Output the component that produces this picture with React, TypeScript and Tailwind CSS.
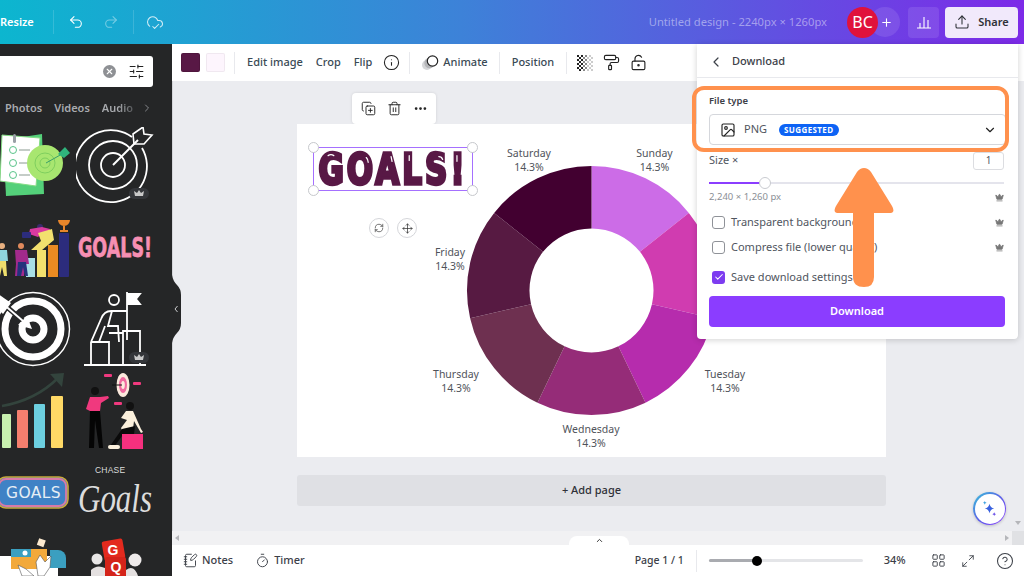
import {
  Undo2, Redo2, CloudCheck, Info, CopyPlus, Trash2, Ellipsis, Plus, Upload, ChevronLeft, ChevronDown,
  ChevronRight, ChevronUp, Image, Crown, Check, RefreshCw, Move, PaintRoller, LockKeyholeOpen,
  SlidersHorizontal, NotebookPen, Timer, LayoutGrid, Maximize2, CircleHelp, X,
} from "lucide-react";

const SEGMENTS = ["#cc6ce7", "#d03cb0", "#b62cad", "#952c78", "#6e3050", "#571a42", "#420030"];
const LABELS = [
  { name: "Saturday", x: 529, y: 157 },
  { name: "Sunday", x: 654.5, y: 157 },
  { name: "Friday", x: 450, y: 256 },
  { name: "Thursday", x: 456, y: 378 },
  { name: "Wednesday", x: 591, y: 433 },
  { name: "Tuesday", x: 725, y: 378 },
];

function segmentPath(i: number): string {
  const cx = 591.5, cy = 290.5, R = 124.5, r = 62;
  const a0 = -Math.PI / 2 + (i * 2 * Math.PI) / 7;
  const a1 = -Math.PI / 2 + ((i + 1) * 2 * Math.PI) / 7;
  const p = (rad: number, a: number) => `${(cx + rad * Math.cos(a)).toFixed(2)} ${(cy + rad * Math.sin(a)).toFixed(2)}`;
  return `M${p(R, a0)} A${R} ${R} 0 0 1 ${p(R, a1)} L${p(r, a1)} A${r} ${r} 0 0 0 ${p(r, a0)} Z`;
}

function Divider() {
  return <div className="h-[22px] w-px bg-[#e8e9ed]" />;
}

function CrownBadge({ x, y }: { x: number; y: number }) {
  return (
    <g>
      <rect x={x - 10} y={y - 5} width="20" height="11" rx="5.5" fill="#34363a" />
      <path d={`M${x - 4} ${y + 3} l-1 -5 l3 2 l2 -3 l2 3 l3 -2 l-1 5 z`} fill="#c9c9c9" />
    </g>
  );
}

// stickers are drawn in page coordinates through the viewBox
function Stickers() {
  return (
    <div className="mt-[10px] grid grid-cols-[76px_96px] grid-rows-[80px_78px_85px_90px_70px_46px]">
      <svg viewBox="0 127 76 80" className="h-full w-full">
        <polygon points="3,140 42,134 44,194 6,196" fill="#54d07a" />
        <polygon points="2,135 40,138 36,186 0,181" fill="#ffffff" stroke="#86dc86" strokeWidth="1" />
        <rect x="13" y="134" width="3" height="9" rx="1.5" fill="#9aa0a6" />
        {[150, 163, 175].map((y) => (
          <g key={y}>
            <circle cx="13" cy={y} r="3.5" fill="none" stroke="#5ac48a" strokeWidth="1" />
            <line x1="19" y1={y} x2="30" y2={y} stroke="#8a9a90" strokeWidth="1" />
          </g>
        ))}
        <circle cx="45" cy="163" r="18" fill="#a8e670" />
        <circle cx="45" cy="163" r="10" fill="none" stroke="#7fcf5e" strokeWidth="1" />
        <circle cx="45" cy="163" r="5" fill="none" stroke="#7fcf5e" strokeWidth="1" />
        <line x1="46" y1="163" x2="62" y2="154" stroke="#3a9e6a" strokeWidth="1" />
        <polygon points="58,154 65,147 70,153 64,158" fill="#2fb47c" />
      </svg>
      <svg viewBox="76 127 96 80" className="h-full w-full">
        <g fill="none" stroke="#ffffff">
          <path d="M132 137 A36 36 0 1 0 142 148" strokeWidth="1.8" />
          <circle cx="113" cy="165" r="24" strokeWidth="1.8" />
          <circle cx="113" cy="165" r="12" strokeWidth="1.8" />
          <line x1="113" y1="165" x2="138" y2="140" strokeWidth="2" />
          <path d="M134 144 L133 134 L143 127 L144 134 L152 135 L144 144 Z" strokeWidth="1.6" />
        </g>
        <CrownBadge x={139} y={193} />
      </svg>
      <svg viewBox="0 207 76 78" className="h-full w-full">
        <rect x="26" y="258" width="9" height="19" fill="#a8dfe6" />
        <rect x="37" y="250" width="9" height="27" fill="#f2e06e" />
        <rect x="48" y="245" width="10" height="32" fill="#ea8a22" />
        <rect x="59" y="233" width="10" height="44" rx="1" fill="#2c2c7c" />
        <path d="M58 220 h12 a6 6 0 0 1 -12 0 z M63 226 h2 v4 h3 v2 h-8 v-2 h3 z" fill="#e8862a" />
        <circle cx="21" cy="246" r="3" fill="#e08a5c" />
        <path d="M15 250 h12 l2 14 h-4 l-1 12 h-3 l-1 -10 l-2 10 h-3 l1 -12 z" fill="#a22a8c" />
        <path d="M18 262 h8 l2 14 h-3 l-2 -9 l-2 9 h-4 z" fill="#24327c" />
        <circle cx="2" cy="246" r="3" fill="#e8b080" />
        <path d="M-4 250 h11 l1 11 h-12 z" fill="#8fd4dc" />
        <path d="M-3 261 h9 l1 15 h-3 l-2 -9 l-2 9 h-3 z" fill="#eede6c" />
        <circle cx="40" cy="227" r="3" fill="#3c2a6c" />
        <path d="M30 229 l12 -2 l8 2 l-1 4 l-8 1 l-3 3 l-9 -3 z" fill="#d83aa0" />
        <path d="M38 233 l14 -4 l2 11 l-12 10 l-11 0 l10 -9 z" fill="#f2e06e" />
        <rect x="22" y="232" width="9" height="6" rx="1" fill="#2c2c7c" />
      </svg>
      <svg viewBox="76 207 96 78" className="h-full w-full">
        <text transform="translate(78 257) scale(1 1.55)" fontFamily="DejaVu Sans" fontWeight="700" fontSize="17.5" fill="#f78fb3" stroke="#f78fb3" strokeWidth="0.5">GOALS!</text>
      </svg>
      <svg viewBox="0 285 76 85" className="h-full w-full">
        <g fill="none" stroke="#ffffff">
          <circle cx="33" cy="329" r="36.5" strokeWidth="1.4" />
          <circle cx="33" cy="329" r="28" strokeWidth="7" />
          <circle cx="33" cy="329" r="11" strokeWidth="7" />
        </g>
        <line x1="0" y1="301" x2="30" y2="327" stroke="#252627" strokeWidth="5" />
        <line x1="2" y1="303" x2="30" y2="327" stroke="#ffffff" strokeWidth="2" />
        <polygon points="32,329 18,325 27,316" fill="#ffffff" />
        <polygon points="-3,293 11,303 3,314 -3,308" fill="#ffffff" />
      </svg>
      <svg viewBox="76 285 96 85" className="h-full w-full">
        <g fill="none" stroke="#ffffff" strokeWidth="1.8">
          <circle cx="114" cy="300" r="5" />
          <line x1="127" y1="292" x2="127" y2="340" />
          <path d="M127 294 h13 l-4 5 l4 5 h-13" fill="#ffffff" />
          <path d="M91 342 l10 -23 q3 -8 10 -8 h16 M112 311 l-4 15 h10 l1 16 M99 342 l6 -16" />
          <path d="M91 342 h18 v23 M91 342 v23 M109 333 h14 v32 M123 333 v-2 h17 v34" />
          <line x1="84" y1="365" x2="146" y2="365" />
        </g>
        <CrownBadge x={139} y={357} />
      </svg>
      <svg viewBox="0 370 76 90" className="h-full w-full">
        <path d="M2 406 Q36 400 58 378" fill="none" stroke="#33443d" strokeWidth="2.5" />
        <polygon points="50,374 64,373 62,387" fill="#33443d" />
        <rect x="2" y="414" width="9" height="34" rx="1" fill="#c9f0b0" />
        <rect x="17" y="410" width="11" height="38" rx="1" fill="#f57f6e" />
        <rect x="34" y="404" width="11" height="44" rx="1" fill="#6ccfe0" />
        <rect x="51" y="396" width="12" height="52" rx="1" fill="#ffd966" />
      </svg>
      <svg viewBox="76 370 96 90" className="h-full w-full">
        <ellipse cx="123" cy="385" rx="6.5" ry="12" fill="#fbe9dc" />
        <ellipse cx="123" cy="385" rx="4" ry="8" fill="#f06aa0" />
        <ellipse cx="123" cy="385" rx="1.8" ry="4" fill="#fbe9dc" />
        <line x1="112" y1="385" x2="122" y2="385" stroke="#111111" strokeWidth="1" />
        <rect x="104" y="374" width="8" height="3" rx="1" fill="#f0397e" />
        <rect x="133" y="382" width="8" height="3" rx="1" fill="#f0397e" />
        <rect x="114" y="402" width="8" height="3" rx="1" fill="#f0397e" />
        <circle cx="95" cy="391" r="4" fill="#111111" />
        <path d="M90 397 h10 l8 -1 l1 2 l-8 5 l-1 8 h-10 l-4 -2 z" fill="#f0397e" />
        <path d="M90 411 h10 l3 37 h-4 l-4 -28 l-1 28 h-5 z" fill="#050505" />
        <circle cx="130" cy="406" r="4" fill="#111111" />
        <path d="M126 411 h7 l8 18 l2 3 l-2 1 l-7 -12 l-1 8 l-10 3 l-2 -4 l6 -8 l-6 -2 z" fill="#fbf0dc" />
        <path d="M122 429 l13 -3 l-1 8 l-12 2 l-8 11 l-4 -1 z" fill="#0a0a0a" />
        <rect x="122" y="434" width="21" height="15" fill="#f5307e" />
        <rect x="108" y="445" width="12" height="4" rx="2" fill="#fbf0dc" />
      </svg>
      <svg viewBox="0 460 76 70" className="h-full w-full">
        <rect x="-3" y="477" width="71" height="31" rx="9" fill="#3f82c5" stroke="#c9a83a" strokeWidth="1.6" />
        <rect x="-1" y="479" width="67" height="27" rx="7" fill="none" stroke="#d87aa8" strokeWidth="1.8" />
        <text x="6" y="498" letterSpacing="0.4" fontFamily="DejaVu Sans" fontSize="15.5" fill="#e6eef5">GOALS</text>
      </svg>
      <svg viewBox="76 460 96 70" className="h-full w-full">
        <text x="95" y="473" fontFamily="Liberation Sans" fontSize="8.5" letterSpacing="0.2" fill="#dcdcdc">CHASE</text>
        <text transform="translate(78 512) scale(1 1.3)" fontFamily="Liberation Serif" fontStyle="italic" fontSize="31" fill="#dcdcdc">Goals</text>
      </svg>
      <svg viewBox="0 530 76 46" className="h-full w-full">
        <rect x="-2" y="556" width="60" height="24" rx="3" fill="#ffffff" />
        <rect x="11" y="549" width="20" height="20" fill="#f2a93b" />
        <rect x="31" y="549" width="16" height="20" fill="#f2a93b" />
        <rect x="11" y="549" width="20" height="8" fill="#3b9fc0" />
        <path d="M50 550 h8 a8 8 0 0 1 8 8 v10 h-16 z" fill="#3b9fc0" />
        <circle cx="25" cy="553" r="2.5" fill="#ffffff" />
        <rect x="38" y="539" width="7" height="7" fill="#fbe9cf" transform="rotate(20 41 542)" />
        <path d="M38 576 l-2 -14 l4 -7 l5 7 l6 -6 l-1 11 l-6 9 z" fill="#ffffff" stroke="#555555" strokeWidth="0.6" />
        <path d="M18 565 l8 4 l8 7 h-12 z" fill="#ffffff" stroke="#555555" strokeWidth="0.6" />
      </svg>
      <svg viewBox="76 530 96 46" className="h-full w-full">
        <rect x="103" y="540" width="21" height="20" rx="2" fill="#e32a1e" transform="rotate(-10 113 550)" />
        <rect x="105" y="557" width="21" height="20" rx="2" fill="#d4241a" />
        <text x="113" y="555" textAnchor="middle" fontFamily="Liberation Sans" fontWeight="700" fontSize="14" fill="#ffffff">G</text>
        <text x="116" y="572" textAnchor="middle" fontFamily="Liberation Sans" fontWeight="700" fontSize="14" fill="#ffffff">Q</text>
        <circle cx="97" cy="559" r="5.5" fill="#e8e6e6" />
        <circle cx="135" cy="560" r="6.5" fill="#eeeaea" />
        <path d="M91 570 q6 -6 14 -2 v8 h-14 z M126 570 q8 -6 12 6 h-12 z" fill="#e4e0e0" />
      </svg>
    </div>
  );
}

function DownloadPanel() {
  return (
    <div className="absolute left-[697px] top-[44px] z-20 flex h-[295px] w-[321px] flex-col rounded-b-[4px] bg-white text-[11px] text-[#50555e] shadow-[0_1px_6px_rgba(0,0,0,0.18)]">
      <div className="flex h-[34px] items-center border-b border-[#e8e9ed] pl-[11px] pt-[2px]">
        <ChevronLeft size={16} strokeWidth={1.8} className="text-[#3c4048]" />
        <span className="ml-[8px] font-medium text-[#3c4048]">Download</span>
      </div>
      <div className="flex flex-col px-[12px]">
        <div className="mt-[16px] h-[14px] text-[9.5px] font-semibold leading-[14px] text-[#3c4048]">File type</div>
        <div className="mt-[6px] flex h-[31px] w-[297px] items-center rounded-[4px] border border-[#d5d7dc] pl-[10px]">
          <Image size={16} strokeWidth={1.7} className="text-[#222]" />
          <span className="ml-[8px] text-[11px] text-[#50555e]">PNG</span>
          <span className="ml-[12px] flex h-[12px] items-center rounded-full bg-[#0d63f5] px-[5px] text-[8px] font-bold tracking-[0.4px] text-white">SUGGESTED</span>
          <ChevronDown size={14} strokeWidth={2} className="ml-auto mr-[8px] text-[#222]" />
        </div>
        <div className="mt-[7px] flex h-[17px] items-center justify-between">
          <span className="text-[11px]">Size ×</span>
          <div className="mr-[2px] flex h-[18px] w-[31px] items-center justify-center rounded-[3px] border border-[#dcdde1] text-[10px]">1</div>
        </div>
        <div className="relative mt-[13px] h-[2px] w-[295px] bg-[#e4e4ec]">
          <div className="h-full w-[56px] bg-[#8b3dff]" />
          <div className="absolute left-[50px] top-[-5px] h-[12px] w-[12px] rounded-full border border-[#c9cbd0] bg-white" />
        </div>
        <div className="mt-[6px] flex h-[14px] items-center justify-between text-[9.5px] text-[#8b8f96]">
          <span>2,240 × 1,260 px</span>
          <Crown size={9} fill="#777" className="mr-[2px] text-[#777]" />
        </div>
        <div className="mt-[10px] flex h-[16px] items-center">
          <div className="ml-[3px] h-[13px] w-[13px] rounded-[3px] border border-[#8f9298]" />
          <span className="ml-[6px]">Transparent background</span>
          <Crown size={9} fill="#777" className="ml-auto mr-[2px] text-[#777]" />
        </div>
        <div className="mt-[9px] flex h-[16px] items-center">
          <div className="ml-[3px] h-[13px] w-[13px] rounded-[3px] border border-[#8f9298]" />
          <span className="ml-[6px]">Compress file (lower quality)</span>
          <Crown size={9} fill="#777" className="ml-auto mr-[2px] text-[#777]" />
        </div>
        <div className="mt-[14px] flex h-[16px] items-center">
          <div className="ml-[3px] flex h-[13px] w-[13px] items-center justify-center rounded-[3px] bg-[#7d3cf0]">
            <Check size={10} strokeWidth={2.5} className="text-white" />
          </div>
          <span className="ml-[6px]">Save download settings</span>
        </div>
        <div className="mt-[11px] flex h-[31px] w-[296px] items-center justify-center rounded-[4px] bg-[#8b3dff] text-[11px] font-semibold text-white">
          Download
        </div>
      </div>
    </div>
  );
}

export default function App() {
  return (
    <div className="relative flex h-[576px] w-[1024px] flex-col overflow-hidden bg-[#ebecf0] font-['Noto_Sans',sans-serif]">
      {/* Header */}
      <header className="flex h-[44px] shrink-0 items-center bg-[linear-gradient(90deg,#0cb6cf,#3d82d8_45%,#7d2ae8)] text-white">
        <span className="text-[11px] font-semibold">Resize</span>
        <div className="ml-[19px] h-[24px] w-px bg-white/15" />
        <Undo2 size={16} strokeWidth={1.6} className="ml-[14px]" />
        <Redo2 size={16} strokeWidth={1.6} className="ml-[19px] opacity-40" />
        <div className="ml-[14px] h-[24px] w-px bg-white/15" />
        <CloudCheck size={18} strokeWidth={1.4} className="ml-[12px] opacity-80" />
        <span className="ml-auto text-[11.2px] text-white/45">Untitled design - 2240px × 1260px</span>
        <div className="relative z-10 ml-[20px] flex h-[31px] w-[31px] items-center justify-center rounded-full bg-[#e0123c] text-[16px]">BC</div>
        <div className="ml-[-8px] flex h-[30px] w-[30px] items-center justify-center rounded-full bg-white/10 pl-[2px]">
          <Plus size={13} strokeWidth={2} />
        </div>
        <div className="ml-[8px] flex h-[31px] w-[31px] items-center justify-center rounded-[4px] bg-white/10">
          <svg viewBox="0 0 16 16" className="h-[16px] w-[16px]" fill="none" stroke="currentColor" strokeWidth="1.1">
            <path d="M1 14 H15 M4 14 V9 M8 14 V3 M12 14 V6" />
          </svg>
        </div>
        <div className="ml-[6px] mr-[6px] flex h-[31px] w-[73px] items-center justify-center gap-[8px] rounded-[4px] bg-[#f1e9fb] text-[11px] font-semibold text-[#2f3138]">
          <Upload size={16} strokeWidth={1.6} />
          Share
        </div>
      </header>

      <div className="relative flex min-h-0 flex-1">
        {/* Side panel */}
        <aside className="h-full w-[172px] shrink-0 overflow-hidden bg-[#252627]">
          <div className="mt-[12px] flex h-[31px] w-[153px] items-center rounded-r-[3px] bg-white">
            <div className="ml-[103px] flex h-[13px] w-[13px] items-center justify-center rounded-full bg-[#8e9094]">
              <X size={9} strokeWidth={3} className="text-white" />
            </div>
            <SlidersHorizontal size={17} strokeWidth={1.5} className="ml-[12px] text-[#222]" />
          </div>
          <div className="mt-[12px] flex h-[18px] items-center text-[11px] font-semibold text-[#a9abaf]">
            <span className="ml-[5px]">Photos</span>
            <span className="ml-[12px]">Videos</span>
            <span className="ml-[12px] bg-[linear-gradient(90deg,#a9abaf_50%,#55575a)] bg-clip-text text-transparent">Audio</span>
            <ChevronRight size={12} className="ml-[8px] text-[#86888c]" />
          </div>
          <Stickers />
        </aside>
        <svg viewBox="0 0 10 68" className="absolute left-[172px] top-[231px] z-10 h-[68px] w-[10px]">
          <path d="M0 0 Q1 6 5 10 Q9 14 9 20 V48 Q9 54 5 58 Q1 62 0 68 Z" fill="#252627" />
          <path d="M5.5 31 L3 34 L5.5 37" fill="none" stroke="#c9cacc" strokeWidth="1" />
        </svg>

        <div className="flex min-w-0 flex-1 flex-col">
          {/* Toolbar */}
          <div className="flex h-[37px] shrink-0 items-center bg-white text-[11px] font-medium text-[#3a4a55]">
            <div className="ml-[9px] h-[19px] w-[19px] rounded-[2px] border border-black/10 bg-[#581845]" />
            <div className="ml-[6px] h-[19px] w-[19px] rounded-[2px] border border-black/5 bg-[#fdf5fd]" />
            <div className="ml-[9px]"><Divider /></div>
            <span className="ml-[12px]">Edit image</span>
            <span className="ml-[13px]">Crop</span>
            <span className="ml-[13px]">Flip</span>
            <Info size={17} strokeWidth={1.5} className="ml-[11px] text-[#222]" />
            <div className="ml-[9px]"><Divider /></div>
            <svg viewBox="0 0 18 18" className="ml-[11px] h-[18px] w-[18px]" fill="none">
              <circle cx="6" cy="11" r="5" fill="#d5d6d8" />
              <circle cx="8.5" cy="9" r="5.2" fill="#b5b6b9" />
              <circle cx="11.5" cy="7" r="5.2" fill="#ffffff" stroke="#222222" strokeWidth="1.2" />
            </svg>
            <span className="ml-[4px]">Animate</span>
            <div className="ml-[11px]"><Divider /></div>
            <span className="ml-[12px]">Position</span>
            <div className="ml-[12px]"><Divider /></div>
            <svg viewBox="0 0 16 16" className="ml-[10px] h-[16px] w-[16px]">
              {[0, 1, 2, 3, 4, 5, 6, 7].flatMap((r) =>
                [0, 1, 2, 3, 4, 5, 6, 7].map((c) =>
                  (r + c) % 2 === 0 ? (
                    <rect key={`${r}-${c}`} x={c * 2} y={r * 2} width="2" height="2" fill={c < 3 ? "#222222" : c < 5 ? "#888888" : "#cccccc"} />
                  ) : null,
                ),
              )}
            </svg>
            <PaintRoller size={17} strokeWidth={1.6} className="ml-[10px] text-[#222]" />
            <LockKeyholeOpen size={17} strokeWidth={1.6} className="ml-[10px] text-[#222]" />
          </div>

          {/* Canvas */}
          <div className="relative min-h-0 flex-1 border-l border-[#d5d6da] pl-[124px] pt-[43px]">
            <div className="absolute left-[179px] top-[12px] flex h-[31px] w-[84px] items-center justify-center gap-[11px] rounded-[4px] bg-white text-[#222] shadow-[0_0_3px_rgba(0,0,0,0.12)]">
              <CopyPlus size={15} strokeWidth={1.5} />
              <Trash2 size={15} strokeWidth={1.5} />
              <Ellipsis size={15} strokeWidth={2.4} />
            </div>

            <div className="relative h-[333px] w-[589px] bg-white">
              <svg viewBox="297 124 589 333" className="absolute inset-0 h-full w-full">
                {SEGMENTS.map((fill, i) => (
                  <path key={fill} d={segmentPath(i)} fill={fill} />
                ))}
                {LABELS.map((l) => (
                  <g key={l.name} textAnchor="middle" fontFamily="Noto Sans" fontSize="10.5" fill="#50535a">
                    <text x={l.x} y={l.y}>{l.name}</text>
                    <text x={l.x} y={l.y + 14}>14.3%</text>
                  </g>
                ))}
              </svg>

              {/* Selected text element */}
              <div className="absolute left-[16px] top-[23px] flex h-[44px] w-[160px] items-center justify-center border border-[#a570ff]">
                <span className="origin-center scale-y-[1.35] font-['DejaVu_Sans',sans-serif] text-[31px] font-bold leading-none tracking-[3px] text-[#581845] [-webkit-text-stroke:2.5px_#581845]">
                  GOALS!
                </span>
                <svg viewBox="0 0 160 44" className="absolute inset-0 h-full w-full" fill="none" stroke="#ffffff" strokeWidth="1.3" strokeLinecap="round">
                  <path d="M12 8 q3 -2 6 0 M52 10 q2 2 2 5 M78 9 l1 5 M97 8 v5 M128 9 q3 0 4 3 M147 8 v6" />
                </svg>
                <span className="absolute left-[-6px] top-[-6px] h-[11px] w-[11px] rounded-full border border-[#c6c8cc] bg-white" />
                <span className="absolute right-[-6px] top-[-6px] h-[11px] w-[11px] rounded-full border border-[#c6c8cc] bg-white" />
                <span className="absolute bottom-[-6px] left-[-6px] h-[11px] w-[11px] rounded-full border border-[#c6c8cc] bg-white" />
                <span className="absolute bottom-[-6px] right-[-6px] h-[11px] w-[11px] rounded-full border border-[#c6c8cc] bg-white" />
              </div>
              <div className="absolute left-[72px] top-[94px] flex gap-[8px]">
                <div className="flex h-[20px] w-[20px] items-center justify-center rounded-full border border-[#d5d6da] bg-white">
                  <RefreshCw size={10} strokeWidth={1.6} className="text-[#333]" />
                </div>
                <div className="flex h-[20px] w-[20px] items-center justify-center rounded-full border border-[#d5d6da] bg-white">
                  <Move size={11} strokeWidth={1.6} className="text-[#333]" />
                </div>
              </div>
            </div>

            <div className="mt-[18px] flex h-[31px] w-[589px] items-center justify-center rounded-[3px] bg-[#dfe0e4] text-[11px] font-medium text-[#2f3138]">
              + Add page
            </div>

            <div className="absolute left-[800px] top-[411px] flex h-[33px] w-[33px] items-center justify-center rounded-full bg-[linear-gradient(135deg,#38c6d8,#5a5fe8,#8b3dff)] shadow-[0_1px_3px_rgba(0,0,0,0.2)]">
              <div className="flex h-[30px] w-[30px] items-center justify-center rounded-full bg-white">
                <svg viewBox="0 0 18 18" className="h-[17px] w-[17px]" fill="#3a62e0">
                  <path d="M9 4 Q9.8 8.2 14 9 Q9.8 9.8 9 14 Q8.2 9.8 4 9 Q8.2 8.2 9 4 Z" />
                  <path d="M4 1 Q4.3 2.7 6 3 Q4.3 3.3 4 5 Q3.7 3.3 2 3 Q3.7 2.7 4 1 Z" fill="#38a0e0" />
                  <path d="M14 13 Q14.3 14.7 16 15 Q14.3 15.3 14 17 Q13.7 15.3 12 15 Q13.7 14.7 14 13 Z" fill="#6a50e8" />
                </svg>
              </div>
            </div>
            <div className="absolute bottom-[6px] right-[3px] h-0 w-0 border-x-[3px] border-t-[4px] border-x-transparent border-t-[#b5b6ba]" />
          </div>

          {/* Horizontal scrollbar */}
          <div className="flex h-[14px] shrink-0 items-center bg-[#f1f1f3] text-[#b5b6ba]">
            <div className="ml-[3px] h-0 w-0 border-y-[3px] border-r-[4px] border-y-transparent border-r-current" />
            <div className="ml-auto mr-[3px] h-0 w-0 border-y-[3px] border-l-[4px] border-y-transparent border-l-current" />
            <div className="h-full w-[12px] bg-[#e0e1e4]" />
          </div>

          {/* Footer */}
          <div className="relative flex h-[31px] shrink-0 items-center bg-white text-[11px] font-medium text-[#3c4048]">
            <div className="absolute left-[397px] top-[-9px] flex h-[9px] w-[60px] items-center justify-center rounded-t-[8px] bg-white">
              <ChevronUp size={9} strokeWidth={2.5} className="text-[#333]" />
            </div>
            <NotebookPen size={15} strokeWidth={1.5} className="ml-[11px]" />
            <span className="ml-[4px]">Notes</span>
            <Timer size={15} strokeWidth={1.5} className="ml-[22px]" />
            <span className="ml-[4px]">Timer</span>
            <span className="ml-[330px] w-[49px] whitespace-nowrap text-[10.5px]">Page 1 / 1</span>
            <div className="ml-[12px] h-[22px] w-px bg-[#e8e9ed]" />
            <div className="relative ml-[12px] h-[3px] w-[154px] rounded-full bg-[#e4e5e8]">
              <div className="h-full w-[48px] rounded-full bg-[#a9abb0]" />
              <div className="absolute left-[43px] top-[-3.5px] h-[10px] w-[10px] rounded-full bg-black" />
            </div>
            <span className="ml-[21px]">34%</span>
            <LayoutGrid size={15} strokeWidth={1.5} className="ml-[25px]" />
            <Maximize2 size={14} strokeWidth={1.5} className="ml-[15px]" />
            <CircleHelp size={18} strokeWidth={1.4} className="ml-[21px]" />
          </div>
        </div>
      </div>

      <DownloadPanel />

      {/* Orange callout over the panel */}
      <div className="absolute left-[692px] top-[86px] z-30 h-[66px] w-[317px] rounded-[12px] border-[4px] border-[#ff914d]" />
      <svg viewBox="0 0 64 122" className="absolute left-[832px] top-[167px] z-30 h-[122px] w-[64px]">
        <path d="M32 1 Q36 1 39 5 L60 39 Q64 46 57 46 L42 46 L42 110 Q42 120 32 120 Q21 120 21 110 L21 46 L7 46 Q0 46 4 39 L25 5 Q28 1 32 1 Z" fill="#ff914d" />
      </svg>
    </div>
  );
}
